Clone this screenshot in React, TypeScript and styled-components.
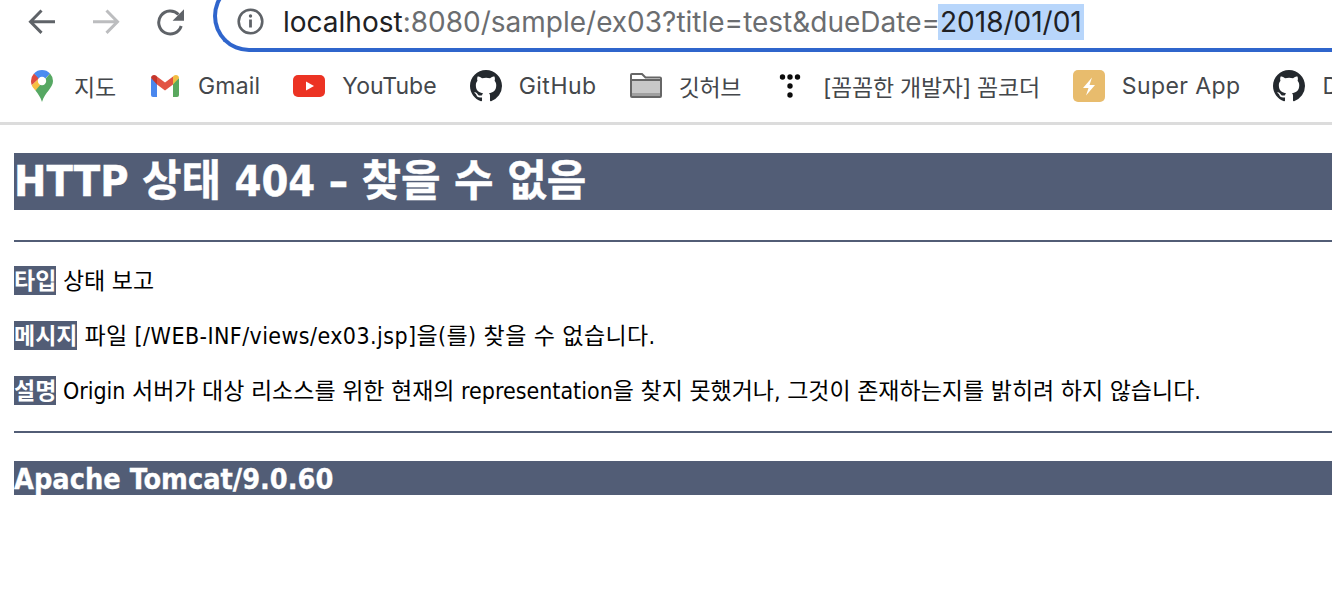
import React from "react";
import styled, { createGlobalStyle } from "styled-components";

const Global = createGlobalStyle`
  html, body { margin: 0; padding: 0; background: #fff; }
  body { width: 1332px; height: 594px; overflow: hidden; }
`;

const Page = styled.div`
  width: 1332px;
  height: 594px;
  overflow: hidden;
  display: flex;
  flex-direction: column;
`;

const Chrome = styled.header`
  height: 125px;
  flex: none;
  box-sizing: border-box;
  border-bottom: 3px solid #dcdcdc;
  display: flex;
  flex-direction: column;
  overflow: hidden;
`;

const Toolbar = styled.div`
  height: 52px;
  flex: none;
  display: flex;
  align-items: flex-end;
`;

const NavButtons = styled.div`
  width: 213px;
  flex: none;
  height: 52px;
  display: flex;
  align-items: flex-start;
  padding: 8px 0 0 27px;
  box-sizing: border-box;
  gap: 34px;
`;

const NavIcon = styled.svg`
  width: 30px;
  height: 28px;
  flex: none;
`;

const Omnibox = styled.div`
  flex: 1;
  height: 72px;
  box-sizing: border-box;
  border: solid #2f65cc;
  border-width: 4px 0 4px 4px;
  border-radius: 36px 0 0 36px;
  display: flex;
  align-items: center;
  margin-right: -40px;
  padding: 20px 0 0 20px;
  gap: 19px;
`;

const InfoIcon = styled.svg`
  width: 27px;
  height: 27px;
  flex: none;
  margin-top: -9px;
`;

const Url = styled.div`
  font-family: "Inter", "Liberation Sans", sans-serif;
  font-size: 28px;
  line-height: 36px;
  color: #6b6d70;
  white-space: nowrap;
  margin-top: -9px;
`;

const Host = styled.span`
  color: #202124;
`;

const Selected = styled.span`
  display: inline-block;
  margin: 0 -2px;
  padding: 0 2px;
  background: #b8d6fb;
  color: #202124;
`;

const Bookmarks = styled.nav`
  flex: 1;
  display: flex;
  align-items: center;
  gap: 33px;
  padding: 0 0 2px 25px;
  white-space: nowrap;
`;

const Bookmark = styled.div<{ $track?: number }>`
  display: flex;
  align-items: center;
  gap: 17px;
  flex: none;
  font-family: "Inter", "Noto Sans CJK KR", sans-serif;
  font-size: 23px;
  letter-spacing: ${(p) => p.$track ?? 0}px;
  color: #44474b;
`;

const BmIcon = styled.svg`
  width: 32px;
  height: 32px;
  flex: none;
  display: block;
`;

const Content = styled.main`
  padding: 28px 0 0 14px;
  font-family: "DejaVu Sans Condensed", "Noto Sans CJK KR", sans-serif;
  color: #000;
`;

const Heading = styled.h1`
  margin: 0 0 30px;
  height: 57px;
  line-height: 57px;
  background: #525d76;
  color: #fff;
  font-size: 43px;
  font-weight: 700;
  white-space: nowrap;
  -webkit-text-stroke: 0.4px #fff;
`;

const Rule = styled.hr`
  margin: 0;
  height: 2px;
  border: 0;
  background: #525d76;
`;

const Line = styled.p<{ $track?: number }>`
  margin: 26px 0 0;
  font-size: 23px;
  line-height: 31px;
  height: 29px;
  white-space: nowrap;
  letter-spacing: ${(p) => p.$track ?? 0}px;
  &:first-of-type { margin-top: 24px; }
`;

const Tag = styled.b`
  display: inline-block;
  height: 29px;
  background: #525d76;
  color: #fff;
  font-weight: 700;
  letter-spacing: 0;
`;

const LastRule = styled(Rule)`
  margin-top: 26px;
`;

const Footer = styled.h3`
  margin: 28px 0 0;
  height: 34px;
  line-height: 36px;
  background: #525d76;
  color: #fff;
  font-size: 28.6px;
  font-weight: 700;
  white-space: nowrap;
  -webkit-text-stroke: 0.3px #fff;
`;

const octo = "M8 0C3.58 0 0 3.58 0 8c0 3.54 2.29 6.53 5.47 7.59.4.07.55-.17.55-.38 0-.19-.01-.82-.01-1.49-2.01.37-2.53-.49-2.69-.94-.09-.23-.48-.94-.82-1.13-.28-.15-.68-.52-.01-.53.63-.01 1.08.58 1.23.82.72 1.21 1.87.87 2.33.66.07-.52.28-.87.51-1.07-1.78-.2-3.64-.89-3.64-3.95 0-.87.31-1.59.82-2.15-.08-.2-.36-1.02.08-2.12 0 0 .67-.21 2.2.82.64-.18 1.32-.27 2-.27.68 0 1.36.09 2 .27 1.53-1.04 2.2-.82 2.2-.82.44 1.1.16 1.92.08 2.12.51.56.82 1.27.82 2.15 0 3.07-1.87 3.75-3.65 3.95.29.25.54.73.54 1.48 0 1.07-.01 1.93-.01 2.2 0 .21.15.46.55.38A8.013 8.013 0 0016 8c0-4.42-3.58-8-8-8z";

const GitHubIcon = () => (
  <BmIcon viewBox="0 0 16 16"><path fill="#24292e" d={octo} /></BmIcon>
);

export default function App() {
  return (
    <Page>
      <Global />
      <Chrome>
        <Toolbar>
          <NavButtons>
            <NavIcon viewBox="0 0 30 28">
              <path d="M28 13.700H4.500M14.500 2.500 3.500 13.700l11 11.200" fill="none" stroke="#5f6368" strokeWidth="3" />
            </NavIcon>
            <NavIcon viewBox="0 0 30 28">
              <path d="M2 13.700h23.500M15.500 2.500l11 11.200-11 11.200" fill="none" stroke="#bcbdbf" strokeWidth="3" />
            </NavIcon>
            <NavIcon viewBox="0 0 30 28">
              <path d="M26.200 18A11.500 11.500 0 1 1 23.500 6.500" fill="none" stroke="#5f6368" strokeWidth="3" />
              <path d="M29 1.300V12.700H17.600z" fill="#5f6368" />
            </NavIcon>
          </NavButtons>
          <Omnibox>
            <InfoIcon viewBox="0 0 27 27">
              <circle cx="13.500" cy="13.500" r="11.800" fill="none" stroke="#5f6368" strokeWidth="2.600" />
              <path d="M13.500 11.500v8" stroke="#5f6368" strokeWidth="2.800" />
              <circle cx="13.500" cy="8" r="1.700" fill="#5f6368" />
            </InfoIcon>
            <Url><Host>localhost</Host>:8080/sample/ex03?title=test&amp;dueDate=<Selected>2018/01/01</Selected></Url>
          </Omnibox>
        </Toolbar>
        <Bookmarks>
          <Bookmark $track={-0.2}>
            <BmIcon viewBox="0 0 32 32">
              <path d="M9 3.500A11 11 0 0 0 6 11c0 1.500.3 3 .8 4.200L14.500 8z" fill="#dd4b3e" />
              <path d="M6.800 15.200 14 8.500l6 5.500-9.500 6.500C9 19 7.500 17 6.800 15.200z" fill="#f6bf41" />
              <path d="M9 3.500A11 11 0 0 1 25 3.500L20 9a4 4 0 0 0-6 0z" fill="#4a8cf0" />
              <path d="M25 3.500A11 11 0 0 1 28 11C28 18 20 22 17 32c-1.500-5-4-8-6.500-11.500L25 3.500z" fill="#56a863" />
              <circle cx="17" cy="11" r="4.200" fill="#fff" />
            </BmIcon>
            지도
          </Bookmark>
          <Bookmark $track={0.2}>
            <BmIcon viewBox="0 0 32 32">
              <path d="M2 27V8l6 4.500V27H4a2 2 0 0 1-2-2z" fill="#4a87ee" />
              <path d="M24 27V12.500L30 8v17a2 2 0 0 1-2 2z" fill="#5aa85e" />
              <path d="M8 6.500v8l8 6 8-6v-8l-8 6z" fill="#e25444" />
              <path d="M2 8a3.200 3.200 0 0 1 5-2.500l1 1v8z" fill="#c5352b" />
              <path d="M24 6.500l1-1A3.200 3.200 0 0 1 30 8l-6 6.500z" fill="#f2bd42" />
            </BmIcon>
            Gmail
          </Bookmark>
          <Bookmark>
            <BmIcon viewBox="0 0 32 32">
              <rect x="0" y="5" width="32" height="22" rx="5" fill="#ec3323" />
              <path d="M13 11.500 21 16l-8 4.500z" fill="#fff" />
            </BmIcon>
            YouTube
          </Bookmark>
          <Bookmark $track={0.5}><GitHubIcon />GitHub</Bookmark>
          <Bookmark $track={-0.4}>
            <BmIcon viewBox="0 0 32 32">
              <path d="M2 10h28v16H2z" fill="#c8c8c8" />
              <path d="M2 23h28v3H2z" fill="#a0a0a0" />
              <path d="M1 5a1 1 0 0 1 1-1h10l3.500 3.500H30a1 1 0 0 1 1 1V26a1 1 0 0 1-1 1H2a1 1 0 0 1-1-1z" fill="none" stroke="#666" strokeWidth="2" />
              <path d="M1 10h30" stroke="#666" strokeWidth="2" />
            </BmIcon>
            깃허브
          </Bookmark>
          <Bookmark $track={-0.25}>
            <BmIcon viewBox="0 0 32 32">
              <g fill="#0b0b0b">
                <circle cx="8.500" cy="7" r="2.700" />
                <circle cx="16" cy="7" r="2.700" />
                <circle cx="23.500" cy="7" r="2.700" />
                <circle cx="16" cy="16" r="2.700" />
                <circle cx="16" cy="25" r="2.700" />
              </g>
            </BmIcon>
            [꼼꼼한 개발자] 꼼코더
          </Bookmark>
          <Bookmark $track={0.4}>
            <BmIcon viewBox="0 0 32 32">
              <rect width="32" height="32" rx="5" fill="#e8bc6d" />
              <path d="M19 7.500 10 18h5.500l-2.500 7.500L22 15h-5.500z" fill="#fff" />
            </BmIcon>
            Super App
          </Bookmark>
          <Bookmark><GitHubIcon />D</Bookmark>
        </Bookmarks>
      </Chrome>
      <Content>
        <Heading>HTTP 상태 404 – 찾을 수 없음</Heading>
        <Rule />
        <Line><Tag>타입</Tag> 상태 보고</Line>
        <Line $track={0.42}><Tag>메시지</Tag> 파일 [/WEB-INF/views/ex03.jsp]을(를) 찾을 수 없습니다.</Line>
        <Line><Tag>설명</Tag> Origin 서버가 대상 리소스를 위한 현재의 representation을 찾지 못했거나, 그것이 존재하는지를 밝히려 하지 않습니다.</Line>
        <LastRule />
        <Footer>Apache Tomcat/9.0.60</Footer>
      </Content>
    </Page>
  );
}
